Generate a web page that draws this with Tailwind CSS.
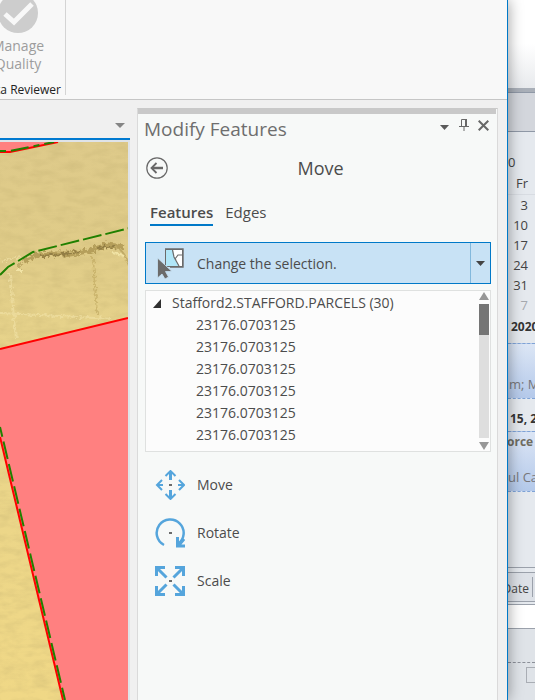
<!DOCTYPE html>
<html lang="en">
<head>
  <meta charset="UTF-8">
  <title>Modify Features</title>
  <meta name="viewport" content="width=device-width, initial-scale=1.0">
  <script src="https://cdn.jsdelivr.net/npm/@tailwindcss/browser@4"></script>
</head>
<body class="flex h-screen overflow-hidden bg-[#f0f0f0] font-['Open_Sans','Noto_Sans',sans-serif] text-sm text-[#4c4c4c]">

  <!-- Application window -->
  <main class="relative z-10 flex min-w-0 flex-1 flex-col border-r border-[#0079c8] bg-[#f0f0f0] shadow-[0_0_14px_rgba(0,0,0,0.4)]">

    <!-- Ribbon -->
    <header class="flex h-[100px] shrink-0 border-b border-[#c6c6c6] bg-[#f8f8f8]">
      <div class="mb-1 flex w-[66px] flex-col items-end overflow-hidden border-r border-[#d4d4d4] pr-1">
        <button class="mr-[3px] flex w-20 shrink-0 flex-col items-center text-center text-sm leading-[18px] text-[#9d9d9d]">
          <svg class="mb-1 h-[33px] w-10" viewBox="0 0 40 33">
            <circle cx="20" cy="13" r="20" fill="#cdcdcd"/>
            <path d="M7 14l9 8L34 4" fill="none" stroke="#f8f8f8" stroke-width="5"/>
          </svg>
          <span>Manage<br>Quality</span>
        </button>
        <span class="mt-2 whitespace-nowrap text-xs leading-[18px] text-[#222]">Data Reviewer</span>
      </div>
    </header>

    <div class="flex min-h-0 flex-1">
      <!-- Map view -->
      <section class="flex w-[130px] shrink-0 flex-col">
        <div class="flex h-[38px] items-end justify-end pr-[5px] pb-[10px]">
          <button aria-label="Open views"><svg class="block h-[5px] w-[10px]" viewBox="0 0 10 5"><path d="M0 0h10L5 5z" fill="#858585"/></svg></button>
        </div>
        <div class="h-[2px] shrink-0 bg-[#0079d0]"></div>
        <div class="min-h-0 flex-1 border-t-2 border-r-2 border-[#dfe3e8]">
          <svg class="block h-full w-full" viewBox="0 0 128 558" preserveAspectRatio="xMinYMin slice">
            <defs>
              <linearGradient id="sand" x2="0" y2="1">
                <stop offset="0" stop-color="#deca8a"/>
                <stop offset=".2" stop-color="#e0cc88"/>
                <stop offset=".38" stop-color="#e8d48b"/>
                <stop offset="1" stop-color="#f0d886"/>
              </linearGradient>
              <filter id="grain" x="0" y="0" width="100%" height="100%">
                <feTurbulence type="fractalNoise" baseFrequency=".06 .14" numOctaves="4" seed="4"/>
                <feColorMatrix values="0 0 0 0 .5  0 0 0 0 .4  0 0 0 0 .15  .55 0 0 0 -.2"/>
              </filter>
              <filter id="rough" x="-10%" y="-50%" width="120%" height="200%">
                <feTurbulence type="fractalNoise" baseFrequency=".3" numOctaves="2" seed="2"/>
                <feDisplacementMap in="SourceGraphic" scale="7"/>
                <feGaussianBlur stdDeviation=".5"/>
              </filter>
            </defs>
            <rect width="128" height="558" fill="url(#sand)"/>
            <rect width="128" height="558" filter="url(#grain)"/>
            <!-- field marks and ditch -->
            <g fill="none" filter="url(#rough)">
              <path d="M24 119L37 113 52 112 70 112 88 109 108 103 124 105" stroke="#a8914c" stroke-width="5" opacity=".75"/>
              <path d="M40 114L54 113 80 110M97 106L116 104" stroke="#85703a" stroke-width="2" opacity=".7"/>
              <path d="M120 107L126 115 129 124M18 126L26 118" stroke="#b39c58" stroke-width="2" opacity=".7"/>
              <path d="M93 116L97 172" stroke="#bea75e" stroke-width="2" opacity=".6"/>
              <path d="M16 128h7M112 110l12 4" stroke="#f1e3a5" stroke-width="2"/>
              <path d="M0 171L60 174 112 177M10 132L16 197M0 119L22 115" stroke="#f2e2a6" stroke-width="2" opacity=".6"/>
            </g>
            <!-- selected parcels -->
            <path d="M0 0H58L10 10H0z" fill="#ff8080"/>
            <path d="M0 207L128 176V558H63L0 295z" fill="#ff8080"/>
            <path d="M0 10H10L58 0M0 207L128 176M0 295L63 558" fill="none" stroke="#ff0000" stroke-width="2"/>
            <g fill="none" stroke="#208000" stroke-width="2">
              <path d="M0 9H10L54 0" stroke-dasharray="6 5 18 5"/>
              <path d="M0 133L8 125 33 110 130 86" stroke-dasharray="19 4"/>
              <path d="M0 285L65 558" stroke-dasharray="18 5" stroke-dashoffset="8"/>
            </g>
          </svg>
        </div>
      </section>

      <!-- Modify Features pane -->
      <aside class="mt-2 mr-[9px] ml-[7px] flex min-w-0 flex-1 flex-col border border-b-0 border-[#dadada] border-t-[#c9c9c9] bg-[#f7f9f8] pr-[6px] pl-[7px]">
        <div class="-mr-[5px] -ml-[7px] h-[5px] shrink-0 bg-[#c9c9c9]"></div>
        <div class="flex h-[30px] items-center">
          <h1 class="-ml-px flex-1 text-[19px] leading-[30px] text-[#6e6e6e]">Modify Features</h1>
          <div class="flex items-center gap-[9px] pr-[2px] pb-2">
            <button aria-label="Pane options"><svg class="mt-1 block h-[5px] w-[9px]" viewBox="0 0 9 5"><path d="M0 0h9L4.500 5z" fill="#5a5a5a"/></svg></button>
            <button aria-label="Auto hide" class="pl-px"><svg class="block h-3 w-[10px]" viewBox="0 0 10 12" fill="none" stroke="#686868"><path d="M2.500 7V.5h5V7M0 7.500h10M5 8v4"/><path d="M7 0v7" stroke-width="2"/></svg></button>
            <button aria-label="Close"><svg class="block h-[11px] w-[11px]" viewBox="0 0 11 11" stroke="#686868" stroke-width="2"><path d="M.7.7l9.600 9.600M10.300.7L.7 10.300"/></svg></button>
          </div>
        </div>

        <div class="mt-3 flex h-6 items-center">
          <button aria-label="Back" class="ml-px">
            <svg class="block h-[22px] w-[22px]" viewBox="0 0 22 22" fill="none" stroke="#686868">
              <circle cx="11" cy="11" r="10.200" stroke-width="1.200"/>
              <path d="M6 11h11" stroke-width="2.500"/>
              <path d="M10.500 6L5.500 11l5 5" stroke-width="1.800"/>
            </svg>
          </button>
          <h2 class="flex-1 pr-[18px] text-center text-lg leading-6">Move</h2>
        </div>

        <nav class="mt-5 ml-[5px] flex gap-3 text-[15px] leading-6">
          <a href="#features" class="border-b-2 border-[#0079c8] font-semibold">Features</a>
          <a href="#edges">Edges</a>
        </nav>

        <!-- Split button -->
        <div class="mt-4 flex h-[42px] shrink-0 border border-[#0079c8] bg-[#c8e2f5]">
          <button class="flex flex-1 items-center gap-[13px] pl-[11px] text-left">
            <svg class="h-[31px] w-[27px]" viewBox="0 0 27 31">
              <path d="M8.500 1.500h17v17h-17z" fill="#fff" stroke="#6b6b6b"/>
              <path d="M9 2h7l1 7 5 9H9z" fill="#b0e6f8"/>
              <path d="M15.500 2l1.500 7 5 9M18 11l3-4h4M19 11l-1 1" fill="none" stroke="#6b6b6b" stroke-width="1.200"/>
              <path d="M8 1h18v18H13" fill="none" stroke="#6b6b6b" stroke-width="1.400"/>
              <path d="M.5 10v20l4.500-4 3 5 3.500-2-3-5.500H15z" fill="#6b6b6b" stroke="#c8e2f5" stroke-width=".8"/>
            </svg>
            <span class="pt-px">Change the selection.</span>
          </button>
          <button aria-label="Selection options" class="flex w-5 items-center justify-center border-l border-[#82b8dc]">
            <svg class="h-[5px] w-[9px]" viewBox="0 0 9 5"><path d="M0 0h9L4.500 5z" fill="#444"/></svg>
          </button>
        </div>

        <!-- Selected features -->
        <div class="mt-[6px] flex h-[162px] shrink-0 border border-[#dfe1e0] bg-[#fcfcfc]">
          <div class="flex-1 pt-px leading-[22px]">
            <button class="flex items-center gap-[11px] pl-[7px] leading-[22px]">
              <svg class="h-[9px] w-[8px]" viewBox="0 0 8 9"><path d="M0 9L8 0v9z" fill="#303030"/></svg>
              <span>Stafford2.STAFFORD.PARCELS (30)</span>
            </button>
            <ul class="pl-[50px]">
              <li>23176.0703125</li>
              <li>23176.0703125</li>
              <li>23176.0703125</li>
              <li>23176.0703125</li>
              <li>23176.0703125</li>
              <li>23176.0703125</li>
            </ul>
          </div>
          <div class="mr-px flex w-[10px] flex-col items-center">
            <svg class="my-px mb-1 h-2 w-[10px] shrink-0" viewBox="0 0 10 8"><path d="M5 0l5 8H0z" fill="#979797"/></svg>
            <div class="w-full flex-1 bg-[#dedede]"><div class="h-[31px] bg-[#757575]"></div></div>
            <svg class="mt-1 mb-px h-2 w-[10px] shrink-0" viewBox="0 0 10 8"><path d="M0 0h10L5 8z" fill="#979797"/></svg>
          </div>
        </div>

        <!-- Tools -->
        <div class="mt-[9px] flex flex-col pl-[10px]">
          <button class="flex h-12 items-center gap-3 text-left">
            <svg class="h-[30px] w-[30px]" viewBox="0 0 30 30" fill="none" stroke="#55a5dc">
              <path d="M15.500 1v9M15.500 20v9" stroke-width="3"/>
              <path d="M2 15h6M23 15h6" stroke-width="2"/>
              <path d="M10.500 6l5-5 5 5M10.500 24l5 5 5-5M7 10l-5 5 5 5M24 10l5 5-5 5" stroke-width="2"/>
              <path d="M14 15h3" stroke="#6b6b6b" stroke-width="2"/>
            </svg>Move
          </button>
          <button class="flex h-12 items-center gap-3 text-left">
            <svg class="h-[30px] w-[30px]" viewBox="0 0 30 30" fill="none" stroke="#55a5dc">
              <path d="M9 27A13.500 13.500 0 1 1 23 26" stroke-width="2.500"/>
              <path d="M22.500 19v9H30M29 21l-5 6" stroke-width="3"/>
              <path d="M14 15h3" stroke="#6b6b6b" stroke-width="2"/>
            </svg>Rotate
          </button>
          <button class="flex h-12 items-center gap-3 text-left">
            <svg class="h-[30px] w-[30px]" viewBox="0 0 30 30" fill="none" stroke="#55a5dc" stroke-width="3">
              <path d="M10 1.500H1.500V10M20 1.500h8.500V10M10 28.500H1.500V20M20 28.500h8.500V20"/>
              <path d="M2 2l9.500 9.500M28 2l-9.500 9.500M2 28l9.500-9.500M28 28l-9.500-9.500" stroke-width="3"/>
              <path d="M14 15h3" stroke="#6b6b6b" stroke-width="2"/>
            </svg>Scale
          </button>
        </div>
      </aside>
    </div>
  </main>

  <!-- Calendar window behind -->
  <aside class="flex w-[27px] shrink-0 flex-col overflow-hidden bg-[#e5e9ee] text-[13px] whitespace-nowrap text-[#444]">
    <div class="h-[88px] shrink-0 bg-linear-to-b from-white from-50% to-[#e8eaed]"></div>
    <div class="h-[5px] shrink-0 border-b border-[#8f98a6] bg-[#a9afb8]"></div>
    <div class="h-[39px] shrink-0 border-b border-[#8f98a6] bg-[#d3d6dc]"></div>

    <div class="flex flex-col pt-5 leading-5">
      <span>0</span>
      <table class="w-full text-right">
        <thead><tr><th class="h-[22px] border-b border-[#d8dce2] pr-[7px] font-normal">Fr</th></tr></thead>
        <tbody>
          <tr><td class="pr-[7px]">3</td></tr>
          <tr><td class="pr-[7px]">10</td></tr>
          <tr><td class="pr-[7px]">17</td></tr>
          <tr><td class="pr-[7px]">24</td></tr>
          <tr><td class="pr-[7px]">31</td></tr>
          <tr><td class="pr-[7px] text-[#a5a9af]">7</td></tr>
        </tbody>
      </table>
    </div>

    <h3 class="h-7 shrink-0 pl-[3px] text-xs leading-6 font-bold text-[#333]">2020</h3>
    <div class="flex h-[56px] shrink-0 items-end border-y border-dashed border-[#7fa3d6] bg-linear-to-b from-[#dce6f5] to-[#b4c9ea] pb-1 pl-px leading-5 text-[#77777a]">m; M</div>
    <h3 class="h-8 shrink-0 pl-[2px] text-xs leading-10 font-bold text-[#333]">15, 2</h3>
    <div class="flex h-[61px] shrink-0 flex-col justify-between border-y border-dashed border-[#7fa3d6] bg-linear-to-b from-[#dce6f5] to-[#b4c9ea] pb-1 leading-5 text-[#77777a]">
      <b class="-ml-px text-xs leading-5 text-[#6f6d62]">orce</b>
      <span>ul Ca</span>
    </div>

    <div class="h-[76px] shrink-0 border-b border-[#9ba1ab]"></div>
    <div class="mt-1 flex h-[30px] shrink-0 items-center justify-end border-y border-[#9ba1ab] bg-[#dde1e7] text-xs">
      <span class="mr-[2px] h-5 border-r border-[#9ba1ab] pr-[3px] leading-6">Date</span>
    </div>
    <div class="mt-[2px] h-[25px] shrink-0 border-y border-[#9ba1ab] bg-white"></div>
    <div class="h-[34px] shrink-0 border-b border-dashed border-[#8c9099] bg-[#dfe3e8]"></div>
    <div class="flex-1 bg-[#dfe3e8] pt-1 pl-[18px]">
      <div class="h-4 w-4 border border-[#a9adb4]"></div>
    </div>
  </aside>

</body>
</html>
